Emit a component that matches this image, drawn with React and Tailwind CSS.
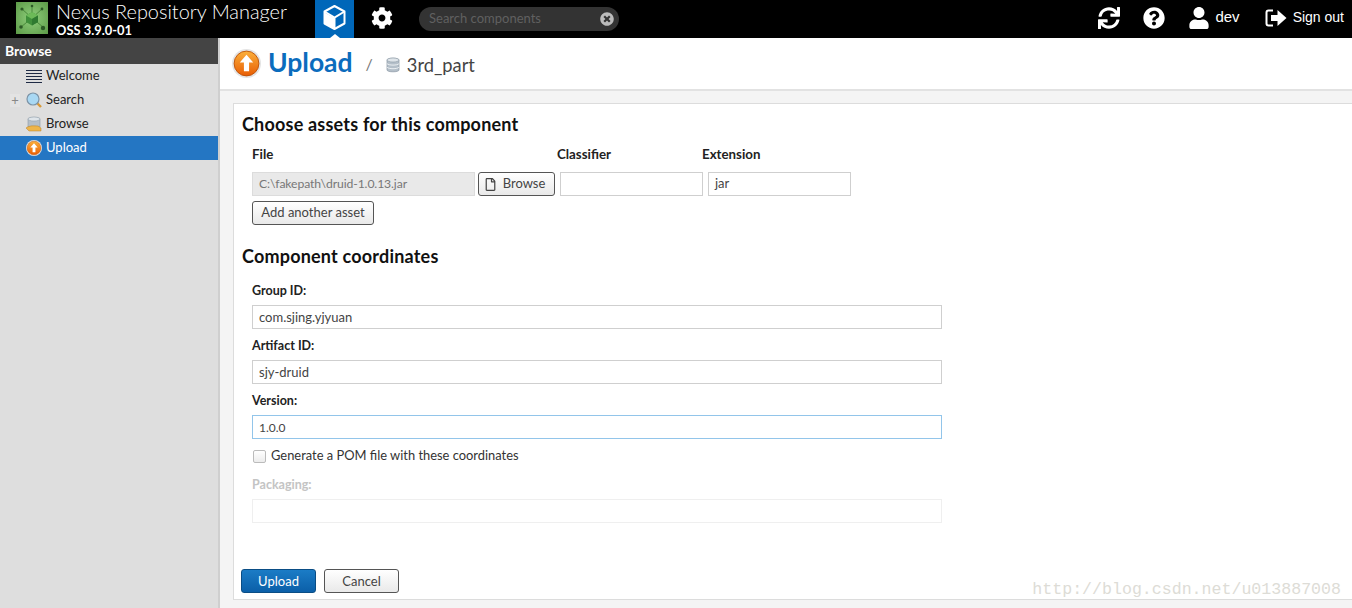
import React from 'react';
import { FaCog, FaTimesCircle, FaSync, FaQuestionCircle, FaUser, FaRegFile } from 'react-icons/fa';

function UploadIcon({ size }) {
  return (
    <svg width={size} height={size} viewBox="0 0 28 28">
      <defs>
        <linearGradient id={`ug${size}`} x1="0" y1="0" x2="0" y2="1">
          <stop offset="0" stopColor="#fbb03b" />
          <stop offset="1" stopColor="#e85d04" />
        </linearGradient>
      </defs>
      <circle cx="14" cy="14" r="14" fill="#e4e4e4" />
      <circle cx="14" cy="14" r="12" fill={`url(#ug${size})`} stroke="#b84a00" strokeWidth="0.8" />
      <path d="M14 5.5 L20.5 13 H16.5 V21.5 H11.5 V13 H7.5 Z" fill="#fff" />
    </svg>
  );
}

function DbIcon({ w = 14, h = 16 }) {
  return (
    <svg width={w} height={h} viewBox="0 0 14 16">
      <path d="M1 3 C1 0.6 13 0.6 13 3 V13 C13 15.4 1 15.4 1 13 Z" fill="#b4bfc9" stroke="#8b98a5" strokeWidth="0.7" />
      <ellipse cx="7" cy="3" rx="6" ry="2" fill="#dfe5ea" stroke="#8b98a5" strokeWidth="0.6" />
      <path d="M1 6.6 C2.5 8.6 11.5 8.6 13 6.6 M1 10.2 C2.5 12.2 11.5 12.2 13 10.2" fill="none" stroke="#f1f4f6" strokeWidth="0.9" />
    </svg>
  );
}

function Logo() {
  return (
    <svg width="32" height="32" viewBox="0 0 32 32" className="shrink-0">
      <defs>
        <radialGradient id="lg" cx="0.5" cy="0.5" r="0.7">
          <stop offset="0" stopColor="#8fd07c" />
          <stop offset="1" stopColor="#5d9a48" />
        </radialGradient>
      </defs>
      <rect width="32" height="32" fill="url(#lg)" />
      <g stroke="#4b8a3c" strokeWidth="1">
        <path d="M16 16 L6 7 M16 16 L26 7 M16 16 L5 25 M16 16 L27 25 M16 16 V4" />
      </g>
      <g fill="#2c5a26">
        <circle cx="6" cy="7" r="1.6" />
        <circle cx="26" cy="7" r="1.4" />
        <circle cx="5" cy="25" r="1.8" />
        <circle cx="27" cy="26" r="2.2" />
        <circle cx="16" cy="4" r="1.3" />
      </g>
      <path d="M16 10 L22 13.5 V20 L16 23.5 L10 20 V13.5 Z" fill="#3f8f3a" />
      <path d="M16 10 L22 13.5 L16 17 L10 13.5 Z" fill="#6cba58" />
      <path d="M16 17 L22 13.5 V20 L16 23.5 Z" fill="#2f7a30" />
    </svg>
  );
}

function CubeIcon() {
  return (
    <svg width="23" height="25" viewBox="0 0 23 25">
      <path d="M11.5 13 L1.5 7.5 V18.5 L11.5 24 Z" fill="#fff" />
      <path d="M11.5 1 L21.5 6.5 V18.5 L11.5 24 L1.5 18.5 V6.5 Z" fill="none" stroke="#fff" strokeWidth="2" strokeLinejoin="round" />
      <path d="M1.5 6.5 L11.5 12.5 L21.5 6.5 M11.5 12.5 V24" fill="none" stroke="#fff" strokeWidth="2" />
    </svg>
  );
}

function SignOutIcon() {
  return (
    <svg width="22" height="18" viewBox="0 0 22 18">
      <path d="M8 1.5 H3.5 Q1.5 1.5 1.5 3.5 V14.5 Q1.5 16.5 3.5 16.5 H8" fill="none" stroke="#fff" strokeWidth="2" />
      <path d="M6 6 H12.5 V1 L21.5 9 L12.5 17 V12 H6 Z" fill="#fff" />
    </svg>
  );
}

function NavRow({ icon, label, active, plus }) {
  return (
    <div className={`h-6 flex items-center ${active ? 'bg-[#2476c3] text-white' : 'text-[#222]'}`}>
      <div className="w-[26px] flex justify-center pl-1">
        {plus && <span className="text-[#888] text-[13px] leading-none bg-[#e3e3e3] w-[10px] text-center">+</span>}
      </div>
      <div className="w-4 h-4 flex items-center justify-center">{icon}</div>
      <span className="ml-1 text-[13px]">{label}</span>
    </div>
  );
}

const inputBase = 'h-6 border px-[6px] flex items-center';
const inputCls = `${inputBase} bg-white text-[#444] border-[#cfcfcf] text-[13px]`;
const btnCls = 'h-6 rounded-[3px] border border-[#555] bg-gradient-to-b from-white to-[#e9e9e9] text-[13px] text-[#444] flex items-center justify-center';

function Field({ label, value, focus }) {
  return (
    <div className="mb-1">
      <div className="h-[24px] pt-[2px] flex items-center text-[12.5px] font-bold text-[#222]">{label}</div>
      <div className={`${inputBase} bg-white text-[#444] mt-[3px] w-[690px] pt-[2px] ${focus ? 'border-[#92c5ea] text-[12px]' : 'border-[#cfcfcf] text-[13px]'}`}>{value}</div>
    </div>
  );
}

export default function App() {
  return (
    <div className="relative w-[1352px] h-[608px] overflow-hidden flex flex-col bg-[#f4f4f4] font-['Lato','Open_Sans',sans-serif]">
      <header className="h-[38px] shrink-0 bg-black flex items-center text-white">
        <div className="ml-4 mt-[-2px]"><Logo /></div>
        <div className="ml-2 w-[259px] flex flex-col">
          <span className="text-[19.9px] leading-[22px] font-light mt-[-1px]">Nexus Repository Manager</span>
          <span className="text-[12.9px] leading-[14px] font-bold mt-[1px]">OSS 3.9.0-01</span>
        </div>
        <div className="relative w-[39px] h-[38px] bg-[#0067b9] flex items-center justify-center">
          <span className="mt-[-3px]"><CubeIcon /></span>
          <span className="absolute bottom-0 left-[15px] w-0 h-0 border-x-[5px] border-x-transparent border-b-[4px] border-b-white" />
        </div>
        <div className="w-[55px] flex justify-center mt-[-2px]"><FaCog size={22} /></div>
        <div className="ml-[10px] w-[200px] h-[24px] rounded-full bg-[#333] flex items-center justify-between pl-[10px] pr-[5px]">
          <span className="text-[13px] text-[#606060]">Search components</span>
          <FaTimesCircle size={14} className="text-[#bbb]" />
        </div>
        <div className="ml-auto flex items-center mt-[-3px] font-['Liberation_Sans',sans-serif]">
          <FaSync size={22} />
          <FaQuestionCircle size={22} className="ml-[23px]" />
          <FaUser size={22} className="ml-[23px]" />
          <span className="ml-[5px] text-[15px]">dev</span>
          <span className="ml-[25px]"><SignOutIcon /></span>
          <span className="ml-[6px] mr-2 text-[14px]">Sign out</span>
        </div>
      </header>
      <div className="flex-1 flex min-h-0">
        <aside className="w-[220px] shrink-0 bg-[#dedede] border-r-2 border-[#cfcfcf]">
          <div className="h-[26px] bg-[#444] text-white text-[14px] font-bold flex items-center pl-[5px] pb-[2px]">Browse</div>
          <NavRow label="Welcome" icon={
            <svg width="16" height="16" viewBox="0 0 16 16" stroke="#1e2a44" strokeWidth="1"><path d="M0 2.5H16M0 5.5H16M0 8.5H16M0 11.5H16M0 14.5H16" /></svg>
          } />
          <NavRow plus label="Search" icon={
            <svg width="16" height="16" viewBox="0 0 16 16"><path d="M10 10L15 15" stroke="#d79a3a" strokeWidth="2.4" /><circle cx="7" cy="7" r="6" fill="#a9d8f3" stroke="#7c93a6" strokeWidth="1.2" /></svg>
          } />
          <NavRow label="Browse" icon={
            <svg width="16" height="16" viewBox="0 0 16 16"><path d="M2 3C2 .8 14 .8 14 3V11H2Z" fill="#b4bfc9" stroke="#8b98a5" strokeWidth=".6" /><ellipse cx="8" cy="3" rx="6" ry="2" fill="#dfe5ea" stroke="#8b98a5" strokeWidth=".5" /><path d="M0 12C4 9 8 10 12 10L15 12V15H3Z" fill="#eeb54a" stroke="#b9832a" strokeWidth=".5" /></svg>
          } />
          <NavRow active label="Upload" icon={<UploadIcon size={16} />} />
        </aside>
        <main className="flex-1 min-w-0 flex flex-col">
          <div className="h-[53px] shrink-0 bg-white border-b-2 border-[#e2e2e2] flex items-center pl-[12px]">
            <UploadIcon size={29} />
            <span className="ml-[7px] text-[26.5px] font-bold text-[#0b6cbd] mt-[-2px]">Upload</span>
            <span className="ml-[13px] text-[16px] text-[#777]">/</span>
            <span className="ml-[13px] mt-[3px]"><DbIcon /></span>
            <span className="ml-[7px] text-[18.3px] text-[#444] mt-[5px]">3rd_part</span>
          </div>
          <div className="flex-1 min-h-0 pl-[13px] pt-[12px] pb-2">
            <div className="h-full bg-white border border-r-0 border-[#dcdcdc] pl-2 relative">
              <h2 className="mt-[9px] h-[22px] leading-[22px] text-[18px] tracking-[0.2px] font-bold text-[#111]">Choose assets for this component</h2>
              <div className="pl-[10px]">
                <div className="mt-[10px] h-[20px] flex items-center text-[13.3px] font-bold text-[#222]">
                  <span className="w-[305px]">File</span>
                  <span className="w-[145px]">Classifier</span>
                  <span>Extension</span>
                </div>
                <div className="mt-[7px] flex">
                  <div className={`${inputBase} w-[223px] bg-[#e9e9e9] border-[#dcdcdc] text-[12.2px] tracking-[-0.1px] text-[#777]`}>C:\fakepath\druid-1.0.13.jar</div>
                  <div className={`${btnCls} w-[77px] ml-[3px] gap-[6px] pr-[4px]`}><FaRegFile size={13} />Browse</div>
                  <div className={`${inputCls} w-[143px] ml-[5px]`}></div>
                  <div className={`${inputCls} w-[143px] ml-[5px]`}>jar</div>
                </div>
                <div className={`${btnCls} w-[122px] mt-[5px]`}>Add another asset</div>
              </div>
              <h2 className="mt-[20px] h-[22px] leading-[22px] text-[18px] tracking-[0.2px] font-bold text-[#111]">Component coordinates</h2>
              <div className="pl-[10px] mt-[11px]">
                <Field label="Group ID:" value="com.sjing.yjyuan" />
                <Field label="Artifact ID:" value="sjy-druid" />
                <Field focus label="Version:" value="1.0.0" />
                <div className="flex items-center h-[20px] mt-[7px]">
                  <span className="w-[13px] h-[13px] ml-[1px] rounded-[2px] border border-[#bbb] bg-gradient-to-b from-white to-[#ececec]" />
                  <span className="ml-[5px] text-[12.9px] text-[#333]">Generate a POM file with these coordinates</span>
                </div>
                <div className="mt-[7px] h-[24px] flex items-center text-[12.5px] font-bold text-[#c4c4c4]">Packaging:</div>
                <div className="mt-[2px] h-6 w-[690px] border border-[#efefef]" />
              </div>
              <div className="mt-[46px] flex ml-[-1px]">
                <div className="h-6 w-[75px] pt-[1px] rounded-[3px] border border-[#0a4d85] bg-gradient-to-b from-[#1b7cc6] to-[#0b5fa8] text-white text-[13px] flex items-center justify-center">Upload</div>
                <div className={`${btnCls} w-[75px] ml-2 pt-[1px]`}>Cancel</div>
              </div>
              <span className="absolute right-[11px] bottom-[-4px] font-['Liberation_Mono',monospace] text-[16.6px] text-[#dddcd6]">http://blog.csdn.net/u013887008</span>
            </div>
          </div>
        </main>
      </div>
    </div>
  );
}
